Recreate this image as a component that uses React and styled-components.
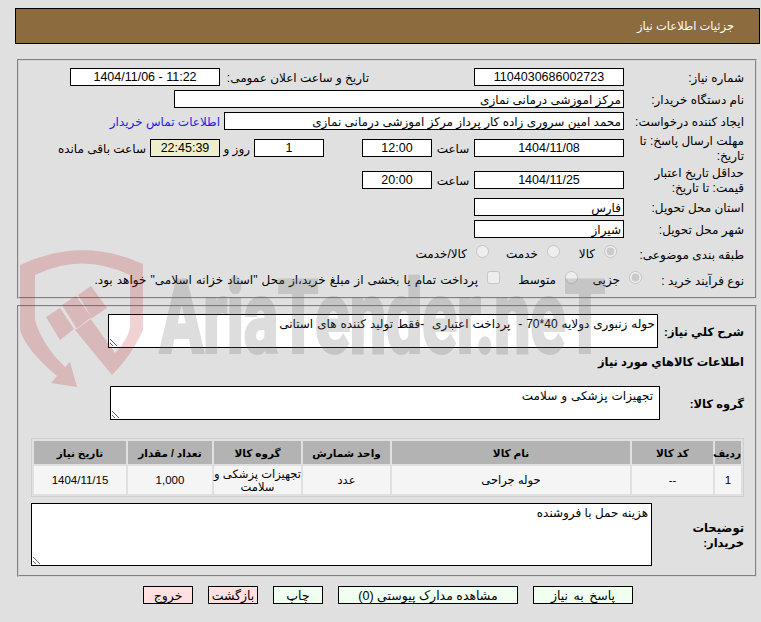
import React from 'react';
import styled, { createGlobalStyle } from "styled-components";

const GlobalStyle = createGlobalStyle`
  html, body {
    margin: 0;
    padding: 0;
    background: #e0e0e0;
  }
  * {
    box-sizing: border-box;
  }
`;

const FONT = `"Liberation Sans", "DejaVu Sans", sans-serif`;

const Page = styled.div`
  position: relative;
  width: 761px;
  height: 622px;
  overflow: hidden;
  padding-top: 8px;
  background: #e0e0e0;
  direction: rtl;
  font-family: ${FONT};
  font-size: 12px;
  color: #000;
`;

const Header = styled.div`
  width: 745px;
  height: 36px;
  margin-right: 1px;
  padding-right: 25px;
  display: flex;
  align-items: center;
  background: #8c6b3f;
  border: 1px solid #000;
  color: #fff;
  font-size: 11.5px;
`;

const Section = styled.div`
  width: 740px;
  height: ${p => p.$height}px;
  margin-top: ${p => p.$top}px;
  margin-right: 4px;
  padding: ${p => p.$pad}px 11px 0 0;
  border: 2px groove #d4d4d4;
`;

const Rows = styled.div`
  display: flex;
  flex-direction: column;
  gap: 4px;
`;

const Row = styled.div`
  display: flex;
  align-items: center;
  height: ${p => p.$h || 18}px;
`;

const Label = styled.div`
  flex: none;
  width: ${p => p.$w || 120}px;
  padding: 2px 0 0 ${p => (p.$bold ? 0 : 6)}px;
  font-size: ${p => (p.$bold ? 11.5 : 12)}px;
  line-height: 15px;
  font-weight: ${p => (p.$bold ? 700 : 400)};
`;

const Field = styled.div`
  flex: none;
  width: ${p => p.$w}px;
  height: 18px;
  margin-right: ${p => p.$gap || 0}px;
  padding: 0 2px;
  background: ${p => p.$bg || "#fff"};
  border: 1px solid #000;
  font-size: ${p => (p.$center ? 12.5 : 12)}px;
  line-height: ${p => (p.$center ? 16 : 18)}px;
  text-align: ${p => (p.$center ? "center" : "right")};
  white-space: nowrap;
  overflow: hidden;
`;

const Unit = styled.div`
  flex: none;
  width: ${p => p.$w}px;
  margin-right: ${p => p.$gap || 0}px;
  padding-top: 2px;
  padding-right: ${p => p.$inset || 0}px;
  text-align: ${p => (p.$center ? "center" : "right")};
  white-space: nowrap;
`;

const Link = styled.a`
  margin-right: 4px;
  padding-top: 2px;
  color: #2222dd;
  white-space: nowrap;
`;

const Option = styled.label`
  flex: none;
  width: ${p => p.$w}px;
  display: flex;
  align-items: center;
  gap: 9px;
  white-space: nowrap;
`;

const Check = styled.input`
  flex: none;
  width: 13px;
  height: 13px;
  margin: -6px 0 0 0;
`;

const OptionText = styled.span`
  line-height: 18px;
  word-spacing: ${p => p.$spread || 0}px;
`;

const NoteRow = styled.div`
  display: flex;
  align-items: center;
  height: ${p => p.$h}px;
  margin-top: ${p => p.$top || 0}px;
`;

const Note = styled.textarea`
  flex: none;
  display: block;
  width: ${p => p.$w}px;
  height: ${p => p.$h}px;
  margin: 0;
  padding: 2px ${p => p.$inset || 2}px 1px 2px;
  background: #fff;
  border: 1px solid #000;
  border-radius: 0;
  outline: none;
  direction: rtl;
  font-family: ${FONT};
  font-size: 12px;
  line-height: 15px;
  word-spacing: ${p => p.$spread || 0}px;
  color: #000;
`;

const Heading = styled.div`
  height: 18px;
  margin-top: 5px;
  font-size: 11.5px;
  font-weight: 700;
  line-height: 18px;
`;

const ItemsTable = styled.table`
  width: 713px;
  margin: 18px 0 0 0;
  border: 1px solid #cfcfcf;
  border-spacing: 2px;
  table-layout: fixed;
`;

const HeadCell = styled.th`
  height: 23px;
  padding: 0;
  background: #b3b3b3;
  font-size: 10.5px;
  font-weight: 700;
  text-align: center;
`;

const Cell = styled.td`
  height: 28px;
  padding: 1px 0 0;
  background: #f5f5f5;
  font-size: 11.5px;
  line-height: 13px;
  text-align: center;
`;

const Buttons = styled.div`
  display: flex;
  gap: 15px;
  margin: 9px 128px 0 0;
`;

const Button = styled.button`
  flex: none;
  width: ${p => p.$w}px;
  height: 18px;
  padding: 0;
  background: ${p => (p.$danger ? "#ffe0e0" : "#f0fff0")};
  border: 1px solid #000;
  border-radius: 0;
  font-family: ${FONT};
  font-size: 12.5px;
  word-spacing: ${p => p.$spread || 0}px;
  color: #000;
`;

const Watermark = styled.svg`
  position: absolute;
  left: 0;
  top: 240px;
  width: 761px;
  height: 160px;
  pointer-events: none;
`;

const columns = [
    {title: "ردیف", width: 26},
    {title: "کد کالا", width: 81},
    {title: "نام کالا", width: 238},
    {title: "واحد شمارش", width: 87},
    {title: "گروه کالا", width: 87},
    {title: "تعداد / مقدار", width: 84},
    {title: "تاریخ نیاز", width: 92},
];

const cells = ["1", "--", "حوله جراحی", "عدد", "تجهیزات پزشکی و سلامت", "1,000", "1404/11/15"];

const App = () => {
    return (
        <Page>
            <GlobalStyle/>
            <Header>جزئیات اطلاعات نیاز</Header>

            <Section $top={15} $height={240} $pad={7}>
                <Rows>
                    <Row>
                        <Label>شماره نیاز:</Label>
                        <Field $w={150} $center>1104030686002723</Field>
                        <Unit $w={254} $inset={105}>تاریخ و ساعت اعلان عمومی:</Unit>
                        <Field $w={150} $center>11:22 - 1404/11/06</Field>
                    </Row>
                    <Row>
                        <Label>نام دستگاه خریدار:</Label>
                        <Field $w={450}>مرکز اموزشی درمانی نمازی</Field>
                    </Row>
                    <Row>
                        <Label>ایجاد کننده درخواست:</Label>
                        <Field $w={400}>محمد امین سروری زاده کار پرداز مرکز اموزشی درمانی نمازی</Field>
                        <Link>اطلاعات تماس خریدار</Link>
                    </Row>
                    <Row $h={28}>
                        <Label>مهلت ارسال پاسخ: تا تاریخ:</Label>
                        <Field $w={150} $center>1404/11/08</Field>
                        <Unit $w={42} $center>ساعت</Unit>
                        <Field $w={70} $center>12:00</Field>
                        <Field $w={70} $center $gap={38}>1</Field>
                        <Unit $w={34} $inset={4}>روز و</Unit>
                        <Field $w={70} $center $bg="#eeeecc">22:45:39</Field>
                        <Unit $w={90} $gap={4}>ساعت باقی مانده</Unit>
                    </Row>
                    <Row $h={28}>
                        <Label>حداقل تاریخ اعتبار قیمت: تا تاریخ:</Label>
                        <Field $w={150} $center>1404/11/25</Field>
                        <Unit $w={42} $center>ساعت</Unit>
                        <Field $w={70} $center>20:00</Field>
                    </Row>
                    <Row>
                        <Label>استان محل تحویل:</Label>
                        <Field $w={150}>فارس</Field>
                    </Row>
                    <Row>
                        <Label>شهر محل تحویل:</Label>
                        <Field $w={150}>شیراز</Field>
                    </Row>
                    <Row $h={24}>
                        <Label>طبقه بندی موضوعی:</Label>
                        <Unit $w={7}/>
                        <Option $w={57}><Check type="radio" disabled defaultChecked/><OptionText>کالا</OptionText></Option>
                        <Option $w={71}><Check type="radio" disabled/><OptionText>خدمت</OptionText></Option>
                        <Option $w={90}><Check type="radio" disabled/><OptionText>کالا/خدمت</OptionText></Option>
                    </Row>
                    <Row $h={20}>
                        <Label $w={102}>نوع فرآیند خرید :</Label>
                        <Option $w={64}><Check type="radio" disabled defaultChecked/><OptionText>جزیی</OptionText></Option>
                        <Option $w={78}><Check type="radio" disabled/><OptionText>متوسط</OptionText></Option>
                        <Option $w={420}><Check type="checkbox" disabled/><OptionText $spread={0.8}>پرداخت تمام یا بخشی از مبلغ خرید،از محل "اسناد خزانه اسلامی" خواهد بود.</OptionText></Option>
                    </Row>
                </Rows>
            </Section>

            <Section $top={6} $height={272} $pad={7}>
                <NoteRow $h={34}>
                    <Label $w={86} $bold>شرح کلي نیاز:</Label>
                    <Note $w={550} $h={34} $spread={0.6} readOnly defaultValue={'حوله زنبوری دولایه 40*70 -  پرداخت اعتباری  -فقط تولید کننده های استانی'}/>
                </NoteRow>
                <Heading>اطلاعات کالاهاي مورد نیاز</Heading>
                <NoteRow $h={34} $top={15}>
                    <Label $w={84} $bold>گروه کالا:</Label>
                    <Note $w={550} $h={34} $inset={6} $spread={0.6} readOnly defaultValue="تجهیزات پزشکی و سلامت"/>
                </NoteRow>
                <ItemsTable>
                    <colgroup>
                        {columns.map(c => <col key={c.title} width={c.width}/>)}
                    </colgroup>
                    <thead>
                        <tr>{columns.map(c => <HeadCell key={c.title}>{c.title}</HeadCell>)}</tr>
                    </thead>
                    <tbody>
                        <tr>{cells.map(c => <Cell key={c}>{c}</Cell>)}</tr>
                    </tbody>
                </ItemsTable>
                <NoteRow $h={63} $top={6}>
                    <Label $w={92} $bold>توضیحات خریدار:</Label>
                    <Note $w={621} $h={63} $inset={3} readOnly defaultValue="هزینه حمل با فروشنده"/>
                </NoteRow>
            </Section>

            <Buttons>
                <Button $w={100} $spread={2}>پاسخ به نیاز</Button>
                <Button $w={180}>مشاهده مدارک پیوستی (0)</Button>
                <Button $w={50}>چاپ</Button>
                <Button $w={50} $danger>بازگشت</Button>
                <Button $w={50} $danger>خروج</Button>
            </Buttons>

            <Watermark viewBox="0 240 761 160">
                <path
                    fill="#b81818"
                    fillOpacity="0.2"
                    fillRule="evenodd"
                    d="M20 265 Q82 236 143 264 L143 330 Q132 355 112 375 L75 330 L90 318 L115 353 Q128 340 130 327 L130 275 Q82 252 35 275 L35 320 Q42 345 65 367 L70 362 L77 387 L51 383 L57 376 Q26 350 20 330 Z
                       M46 317 L60 308 L74 329 L60 340 Z
                       M62 305 L76 296 L92 318 L77 329 Z
                       M78 295 L91 286 L107 308 L92 318 Z"
                />
                <text
                    x="160"
                    y="352"
                    textLength="445"
                    lengthAdjust="spacingAndGlyphs"
                    fill="#686868"
                    stroke="#686868"
                    strokeWidth="4"
                    opacity="0.22"
                    fontFamily="Roboto, sans-serif"
                    fontWeight="700"
                    fontSize="100"
                    style={{direction: "ltr"}}
                >AriaTender.neT</text>
            </Watermark>
        </Page>
    );
};

export default App;
